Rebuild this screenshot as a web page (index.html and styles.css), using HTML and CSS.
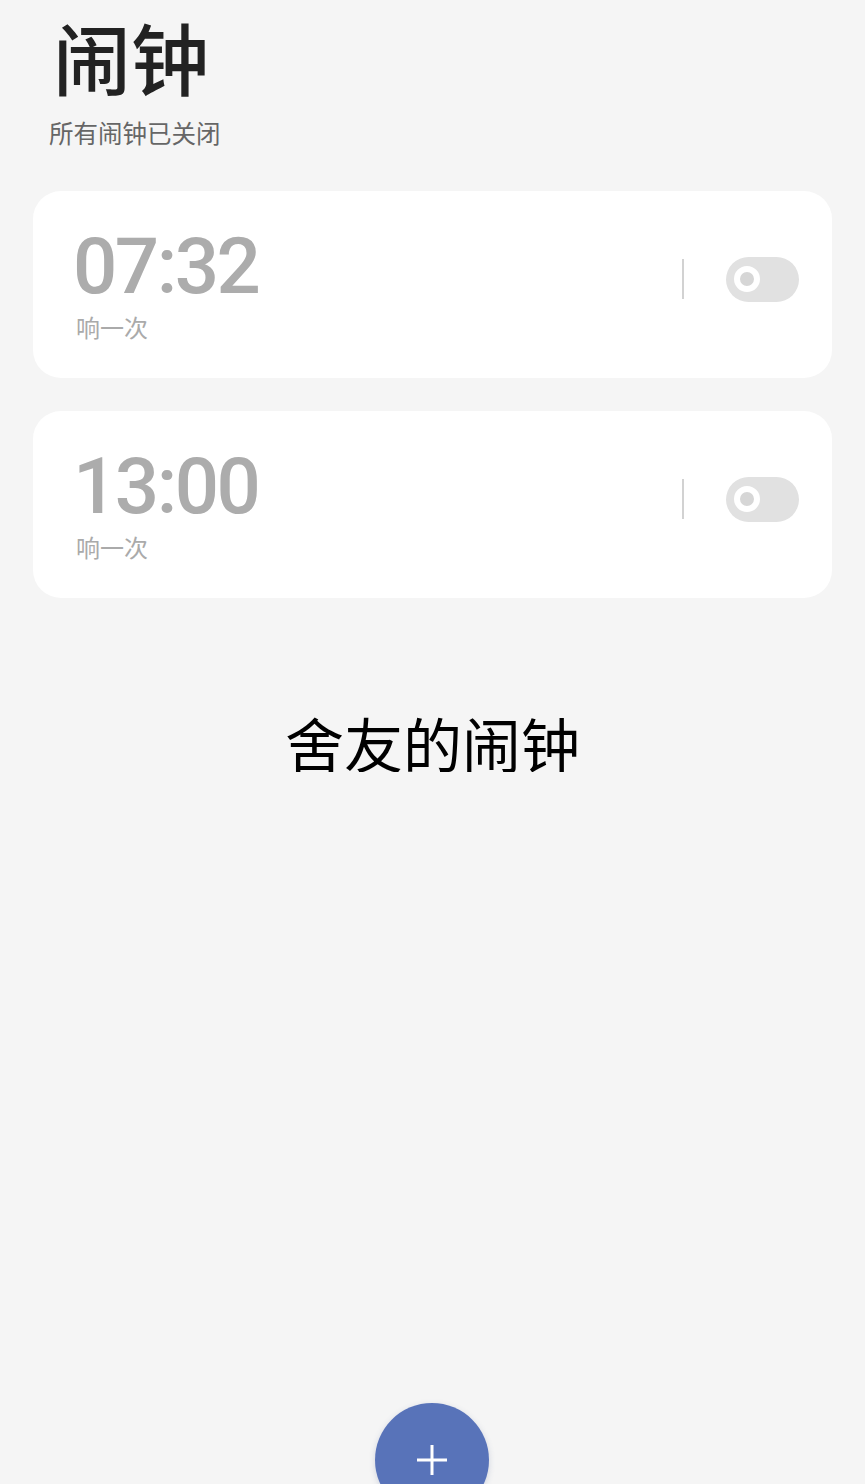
FILE: index.html
```html
<!DOCTYPE html>
<html lang="zh-CN">
<head>
  <meta charset="UTF-8">
  <meta name="viewport" content="width=device-width, initial-scale=1.0">
  <title>闹钟</title>
  <link rel="stylesheet" href="styles.css">
</head>
<body>
  <div class="page">
    <div class="header">
      <h1 class="title">闹钟</h1>
      <p class="subtitle">所有闹钟已关闭</p>
    </div>

    <div class="alarm-list">
      <div class="alarm-card">
        <div class="alarm-info">
          <div class="alarm-time">07:32</div>
          <div class="alarm-repeat">响一次</div>
        </div>
        <div class="alarm-actions">
          <span class="divider"></span>
          <span class="toggle"><span class="knob"></span></span>
        </div>
      </div>
      <div class="alarm-card">
        <div class="alarm-info">
          <div class="alarm-time">13:00</div>
          <div class="alarm-repeat">响一次</div>
        </div>
        <div class="alarm-actions">
          <span class="divider"></span>
          <span class="toggle"><span class="knob"></span></span>
        </div>
      </div>
    </div>

    <p class="caption">舍友的闹钟</p>
  </div>

  <button class="fab" aria-label="添加闹钟">
    <svg width="34" height="34" viewBox="0 0 34 34">
      <path d="M17 2v30M2 17h30" stroke="#fff" stroke-width="3" fill="none"/>
    </svg>
  </button>
</body>
</html>
```

FILE: styles.css
```css
body {
  margin: 0;
  background: #f5f5f5;
  font-family: "Noto Sans CJK SC", "Noto Sans", sans-serif;
  color: #222;
  overflow: hidden;
}
.page {
  padding: 0 33px;
}
.header {
  padding-left: 20px;
}
.title {
  margin: 0;
  font-size: 78px;
  line-height: normal;
  font-weight: 500;
  color: #222;
}
.subtitle {
  margin: 9px 0 0 -4px;
  font-size: 24.5px;
  line-height: 1;
  color: #666;
}
.alarm-list {
  display: flex;
  flex-direction: column;
  gap: 33px;
  margin-top: 45px;
}
.alarm-card {
  height: 187px;
  box-sizing: border-box;
  background: #fff;
  border-radius: 28px;
  display: flex;
  justify-content: space-between;
  padding: 37px 33px 0 40px;
}
.alarm-time {
  font-family: Roboto, "Noto Sans", sans-serif;
  font-size: 78px;
  font-weight: 500;
  line-height: 1;
  letter-spacing: -2.5px;
  color: #acacac;
}
.alarm-repeat {
  margin: 9px 0 0 3px;
  font-size: 24px;
  line-height: 1;
  color: #aaa;
}
.alarm-actions {
  display: flex;
  align-items: center;
  gap: 42px;
  height: 45px;
  margin-top: 29px;
}
.divider {
  width: 2px;
  height: 40px;
  background: #d2d2d2;
}
.toggle {
  width: 73px;
  height: 45px;
  border-radius: 23px;
  background: #e1e1e1;
  display: flex;
  align-items: center;
  padding-left: 8px;
  box-sizing: border-box;
}
.knob {
  width: 14px;
  height: 14px;
  border-radius: 50%;
  background: #d6d6d6;
  border: 6px solid #fff;
}
.caption {
  margin: 115px 0 0 0;
  text-align: center;
  font-size: 59px;
  line-height: 1;
  color: #000;
}
.fab {
  position: absolute;
  left: 375px;
  top: 1403px;
  width: 114px;
  height: 114px;
  border-radius: 50%;
  border: none;
  background: #5873b9;
  display: flex;
  justify-content: center;
  padding: 40px 0 0 0;
  box-sizing: border-box;
  box-shadow: 0 2px 6px rgba(60, 80, 140, 0.2);
}
```
